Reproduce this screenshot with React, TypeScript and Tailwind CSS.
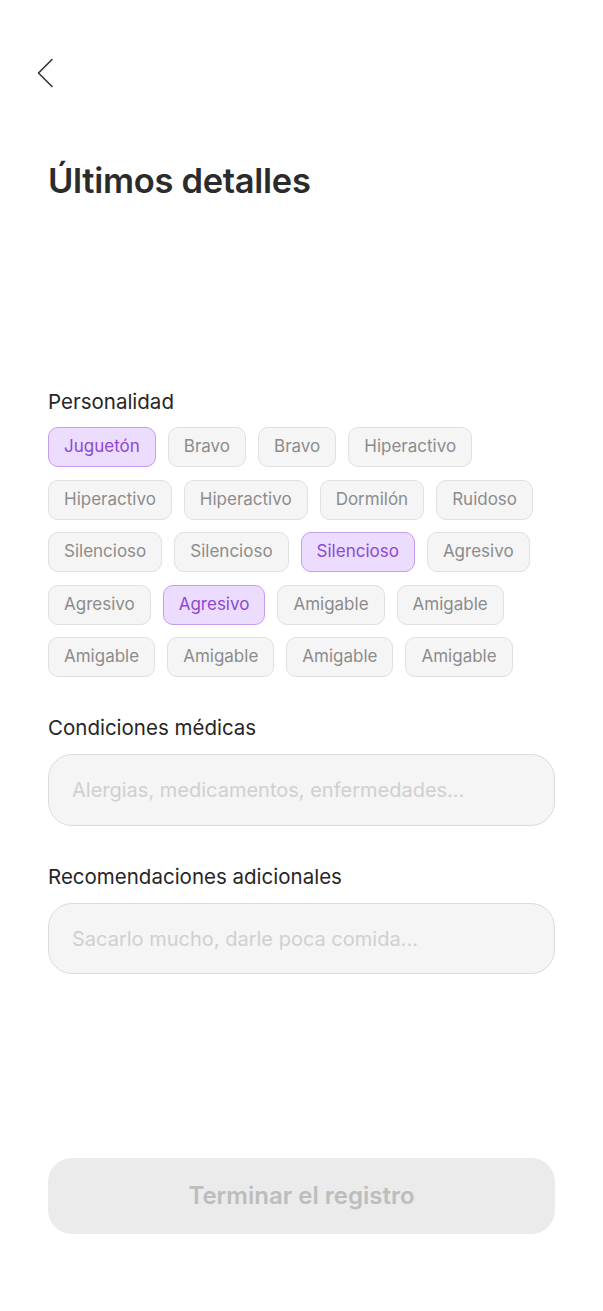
import { useState } from "react";

const tags = [
  "Juguetón", "Bravo", "Bravo", "Hiperactivo",
  "Hiperactivo", "Hiperactivo", "Dormilón", "Ruidoso",
  "Silencioso", "Silencioso", "Silencioso", "Agresivo",
  "Agresivo", "Agresivo", "Amigable", "Amigable",
  "Amigable", "Amigable", "Amigable", "Amigable",
];

export default function App() {
  const [selected, setSelected] = useState<number[]>([0, 10, 13]);

  const toggle = (i: number) =>
    setSelected((s) => (s.includes(i) ? s.filter((x) => x !== i) : [...s, i]));

  return (
    <div
      className="min-h-[1311px] w-full bg-white flex flex-col px-12"
      style={{ fontFamily: "Inter, 'Noto Sans', sans-serif" }}
    >
      <button className="mt-[57px] -ml-[12px] w-10 h-8 flex items-center" aria-label="Volver">
        <svg width="20" height="30" viewBox="0 0 20 30" fill="none">
          <path d="M16 1.5 L2.5 15 L16 28.5" stroke="#333333" strokeWidth="1.6" strokeLinecap="round" strokeLinejoin="round" />
        </svg>
      </button>

      <h1 className="mt-[72px] text-[34.5px] leading-[40px] font-semibold tracking-[-0.3px] text-[#2b2b2b]">
        Últimos detalles
      </h1>

      <section className="mt-[189px]">
        <p className="text-[20.5px] leading-6 text-[#262626]">Personalidad</p>
        <div className="mt-[13px] flex flex-wrap gap-x-3 gap-y-[12.5px] pr-2">
          {tags.map((t, i) => {
            const on = selected.includes(i);
            return (
              <button
                key={i}
                onClick={() => toggle(i)}
                className={
                  on
                    ? "h-10 px-[15px] rounded-[10px] border-[1.5px] border-[#c29df0] bg-[#ecdcfd] text-[17px] text-[#8d48d4]"
                    : "h-10 px-[15px] rounded-[10px] border-[1.5px] border-[#e0e0e0] bg-[#f5f5f5] text-[17px] text-[#8c8c8c]"
                }
              >
                {t}
              </button>
            );
          })}
        </div>
      </section>

      <section className="mt-[39px]">
        <p className="text-[20.5px] leading-6 text-[#262626]">Condiciones médicas</p>
        <input
          className="mt-[14px] w-full h-[72px] rounded-[24px] border-[1.5px] border-[#dcdcdc] bg-[#f5f5f5] px-[23px] text-[20px] text-[#333] placeholder:text-[#d0d0d0] outline-none"
          placeholder="Alergias, medicamentos, enfermedades..."
        />
      </section>

      <section className="mt-[39px]">
        <p className="text-[20.5px] leading-6 text-[#262626]">Recomendaciones adicionales</p>
        <input
          className="mt-[14px] w-full h-[71px] rounded-[24px] border-[1.5px] border-[#dcdcdc] bg-[#f5f5f5] px-[23px] text-[20px] text-[#333] placeholder:text-[#d0d0d0] outline-none"
          placeholder="Sacarlo mucho, darle poca comida..."
        />
      </section>

      <button
        disabled
        className="mt-[184px] w-full h-[76px] rounded-[24px] bg-[#ebebeb] text-[24px] font-semibold text-[#bdbdbd]"
      >
        Terminar el registro
      </button>
    </div>
  );
}
